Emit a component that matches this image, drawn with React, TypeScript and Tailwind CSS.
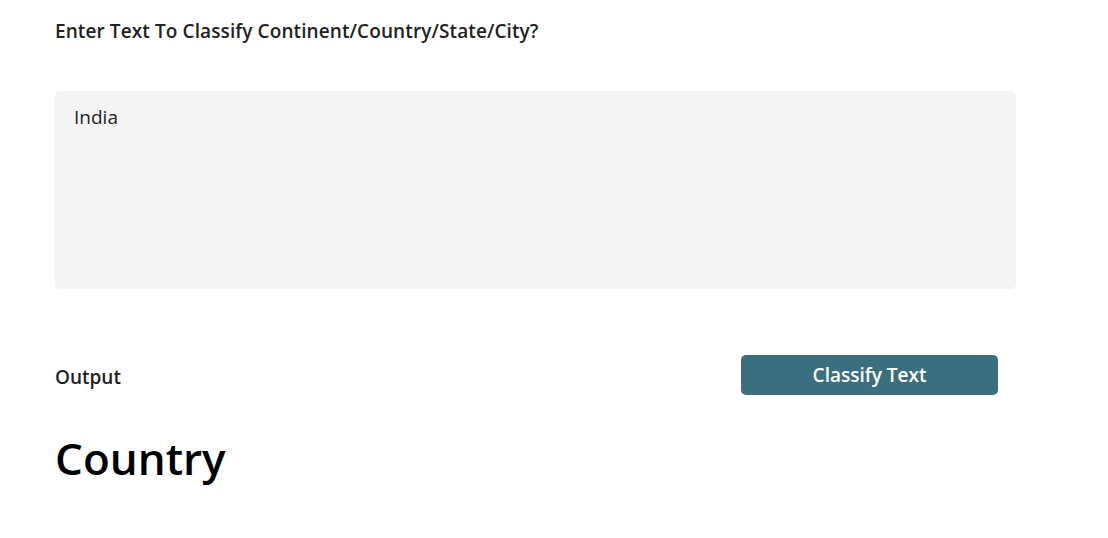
import { useState } from "react";

export default function App() {
  const [text, setText] = useState("India");

  return (
    <div
      className="min-h-screen bg-white text-[#222] pl-[55px] pt-[18px]"
      style={{ fontFamily: '"Open Sans", "Noto Sans", sans-serif' }}
    >
      <div className="w-[961px]">
        {/* Prompt */}
        <label className="block h-[26px] text-[19px] font-semibold leading-[26px] tracking-[0.1px]">
          Enter Text To Classify Continent/Country/State/City?
        </label>

        {/* Input */}
        <textarea
          value={text}
          onChange={(e) => setText(e.target.value)}
          className="mt-[47px] block h-[198px] w-full resize-none rounded-[5px] bg-[#f4f4f4] px-[19px] py-[13px] text-[19px] leading-[26px] text-[#222] outline-none"
        />

        {/* Output row */}
        <div className="mt-[66px] flex h-[40px] items-center">
          <span className="mt-[4px] flex-1 text-[19px] font-semibold">
            Output
          </span>
          <button className="mr-[18px] h-[40px] w-[257px] rounded-[5px] bg-[#3b6e7e] text-[19px] font-semibold text-white">
            Classify Text
          </button>
        </div>

        <div className="mt-[33px] text-[44px] font-semibold leading-[60px] text-black">
          Country
        </div>
      </div>
    </div>
  );
}
